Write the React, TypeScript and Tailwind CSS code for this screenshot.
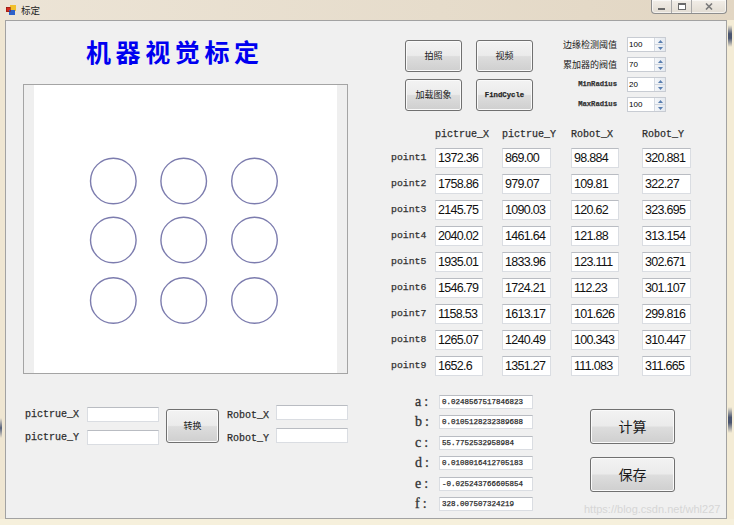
import React from 'react';

const cjk = "font-['Noto_Sans_CJK_SC',sans-serif]";
const mono = "font-['Liberation_Mono','Noto_Sans_CJK_SC',monospace] [-webkit-text-stroke:0.25px_#333]";

const rows = [
  ['point1', '1372.36', '869.00', '98.884', '320.881'],
  ['point2', '1758.86', '979.07', '109.81', '322.27'],
  ['point3', '2145.75', '1090.03', '120.62', '323.695'],
  ['point4', '2040.02', '1461.64', '121.88', '313.154'],
  ['point5', '1935.01', '1833.96', '123.111', '302.671'],
  ['point6', '1546.79', '1724.21', '112.23', '301.107'],
  ['point7', '1158.53', '1613.17', '101.626', '299.816'],
  ['point8', '1265.07', '1240.49', '100.343', '310.447'],
  ['point9', '1652.6', '1351.27', '111.083', '311.665'],
];

// column offsets for the 4 value columns
const cols = ['w-[48px]', 'ml-[19px] w-[49px]', 'ml-[20px] w-[48px]', 'ml-[23px] w-[49px]'];
const headers = ['pictrue_X', 'pictrue_Y', 'Robot_X', 'Robot_Y'];

const coeffs = [
  ['a', '0.0248567517846823'],
  ['b', '0.0105128232389688'],
  ['c', '55.7752532958984'],
  ['d', '0.0108016412705183'],
  ['e', '-0.025243766605854'],
  ['f', '328.007507324219'],
];

const circles = [79.3, 149.7, 220.5].flatMap((cx) => [96, 155, 215.5].map((cy) => ({ cx, cy })));

function WinButton({ children, className = '' }: { children: React.ReactNode; className?: string }) {
  return (
    <div
      className={`flex items-center justify-center rounded-[3px] border border-[#707070] bg-[linear-gradient(180deg,#f3f3f3_0%,#ebebeb_48%,#dddddd_52%,#cfcfcf_100%)] shadow-[inset_0_0_0_1px_#fafafa] text-[#1a1a1a] ${className}`}
    >
      {children}
    </div>
  );
}

function TextBox({ className = '', children }: { className?: string; children?: React.ReactNode }) {
  return (
    <div className={`border border-[#dadde2] border-t-[#b9bcc2] bg-white ${className}`}>{children}</div>
  );
}

function Spin({ value }: { value: string }) {
  return (
    <div className="flex h-[15px] w-[39px] border border-[#c8ccd3] bg-white">
      <div className="flex-1 pl-[1px] text-[8px] leading-[13px] font-['Liberation_Sans',sans-serif] text-black">{value}</div>
      <div className="flex w-[11px] flex-col border-l border-[#d6dbe2] bg-[linear-gradient(90deg,#f4f6f9,#e4e9ef)]">
        <div className="flex flex-1 items-center justify-center border-b border-[#cfd5dd]">
          <svg width="5" height="3" viewBox="0 0 5 3"><path d="M0 3 L2.5 0 L5 3 Z" fill="#5a7fb0" /></svg>
        </div>
        <div className="flex flex-1 items-center justify-center">
          <svg width="5" height="3" viewBox="0 0 5 3"><path d="M0 0 L2.5 3 L5 0 Z" fill="#5a7fb0" /></svg>
        </div>
      </div>
    </div>
  );
}

export default function App() {
  return (
    <div className="flex h-[525px] w-[734px] flex-col overflow-hidden bg-[linear-gradient(90deg,#ece4d6,#e6dccb_60%,#e2d6c3)]">
      {/* title bar */}
      <div className="flex h-[20px] shrink-0 items-start">
        <svg className="ml-[6px] mt-[5px]" width="11" height="11" viewBox="0 0 11 11">
          <rect x="0" y="2" width="5" height="5" fill="#d42a1e" />
          <rect x="4" y="0" width="6" height="6" fill="#f2c02a" />
          <rect x="3" y="5" width="6" height="5" fill="#2f62c9" />
          <rect x="0.5" y="2.5" width="4" height="4" fill="none" stroke="#8a1a10" strokeWidth="0.6" />
        </svg>
        <span className={`ml-[4px] mt-[4px] text-[9.5px] leading-[12px] text-[#1e1e1e] ${cjk}`}>标定</span>
        <div className="ml-auto mr-[7px] flex h-[14px] rounded-b-[4px] border border-t-0 border-[#8e8e8e] bg-[linear-gradient(180deg,#f2eee8,#e2dcd2)] shadow-[inset_0_0_0_1px_rgba(255,255,255,0.6)]">
          <div className="flex w-[20px] items-center justify-center border-r border-[#a8a8a8]">
            <div className="mt-[4px] h-[2px] w-[7px] border border-[#6a6a6a] bg-white" />
          </div>
          <div className="flex w-[20px] items-center justify-center border-r border-[#a8a8a8]">
            <div className="h-[7px] w-[8px] border border-[#6a6a6a] border-t-2 bg-white" />
          </div>
          <div className="flex w-[34px] items-center justify-center">
            <svg width="8" height="7" viewBox="0 0 8 7">
              <path d="M1 0.5 L7 6.5 M7 0.5 L1 6.5" stroke="#7a7a7a" strokeWidth="1.6" />
            </svg>
          </div>
        </div>
      </div>

      <div className="flex h-[499px] shrink-0">
        {/* left frame */}
        <div className="flex w-[5px] flex-col bg-[#efe6d2]">
          <div className="h-[398px]" />
          <div className="ml-0 h-[20px] w-[2px] bg-[linear-gradient(180deg,#efe6d2,#55607a,#efe6d2)]" />
        </div>

        {/* client area */}
        <div className="relative flex w-[722px] overflow-hidden border border-[#a2a2a2] bg-[#f0f0f0]">
          {/* left column */}
          <div className="ml-[17px] flex w-[325px] flex-col">
            <div className={`mt-[15px] h-[30px] pl-[63px] text-[25px] font-bold leading-[30px] tracking-[4.6px] text-[#0000f0] ${cjk}`}>
              机器视觉标定
            </div>
            <div className="mt-[18px] flex h-[290px] w-[325px] justify-center border border-[#a4a4a4] bg-[#efefef]">
              <div className="h-[288px] w-[303px] bg-white">
                <svg width="303" height="288" viewBox="0 0 303 288">
                  {circles.map((c, i) => (
                    <circle key={i} cx={c.cx} cy={c.cy} r="22.8" fill="none" stroke="#7c7cae" strokeWidth="1.4" />
                  ))}
                </svg>
              </div>
            </div>

            {/* conversion row */}
            <div className="mt-[31px] flex items-center">
              <div className="ml-[2px] grid grid-cols-[62px_72px] gap-y-[8px]">
                <span className={`text-[10px] leading-[15px] text-[#2a2a2a] ${mono}`}>pictrue_X</span>
                <TextBox className="h-[15px]" />
                <span className={`text-[10px] leading-[15px] text-[#2a2a2a] ${mono}`}>pictrue_Y</span>
                <TextBox className="h-[15px]" />
              </div>
              <WinButton className={`ml-[7px] h-[34px] w-[53px] text-[9px] ${cjk}`}>转换</WinButton>
              <div className="ml-[8px] mt-[3px] grid grid-cols-[49px_72px] gap-y-[8px]">
                <span className={`text-[10px] leading-[15px] text-[#2a2a2a] ${mono}`}>Robot_X</span>
                <TextBox className="-mt-[3px] h-[15px]" />
                <span className={`text-[10px] leading-[15px] text-[#2a2a2a] ${mono}`}>Robot_Y</span>
                <TextBox className="-mt-[3px] h-[15px]" />
              </div>
            </div>
          </div>

          {/* right column */}
          <div className="ml-[42px] flex flex-col">
            <div className="mt-[16px] flex items-start">
              <div className="ml-[15px] mt-[3px] grid grid-cols-[57px_57px] gap-x-[14px] gap-y-[7px]">
                <WinButton className={`h-[32px] text-[9px] ${cjk}`}>拍照</WinButton>
                <WinButton className={`h-[32px] text-[9px] ${cjk}`}>视频</WinButton>
                <WinButton className={`h-[32px] text-[9px] ${cjk}`}>加载图象</WinButton>
                <WinButton className={`h-[32px] text-[7.3px] font-bold ${mono}`}>FindCycle</WinButton>
              </div>
              <div className="ml-[10px] grid grid-cols-[74px_39px] items-center gap-x-[10px] gap-y-[5px]">
                <span className={`text-right text-[9px] leading-[15px] text-[#222] ${cjk}`}>边缘检测阈值</span>
                <Spin value="100" />
                <span className={`text-right text-[9px] leading-[15px] text-[#222] ${cjk}`}>累加器的阀值</span>
                <Spin value="70" />
                <span className={`text-right text-[7.2px] font-bold leading-[15px] text-[#333] ${mono}`}>MinRadius</span>
                <Spin value="20" />
                <span className={`text-right text-[7.2px] font-bold leading-[15px] text-[#333] ${mono}`}>MaxRadius</span>
                <Spin value="100" />
              </div>
            </div>

            {/* table header */}
            <div className="mt-[16px] flex h-[14px] items-center">
              <div className="w-[45px]" />
              {headers.map((h, i) => (
                <span key={h} className={`${cols[i]} text-[10px] leading-[14px] text-[#2a2a2a] ${mono}`}>
                  {h}
                </span>
              ))}
            </div>

            {/* table rows */}
            <div className="mt-[6px] flex flex-col gap-[6px]">
              {rows.map((r) => (
                <div key={r[0]} className="flex h-[20px] items-center">
                  <span className={`w-[45px] pl-[1px] text-[9.8px] leading-[20px] text-[#333] ${mono}`}>{r[0]}</span>
                  {r.slice(1).map((v, i) => (
                    <TextBox key={i} className={`${cols[i]} h-[20px]`}>
                      <span className="block pl-[2px] text-[12.5px] leading-[18px] tracking-[-0.7px] text-[#111] font-['Liberation_Sans',sans-serif]">
                        {v}
                      </span>
                    </TextBox>
                  ))}
                </div>
              ))}
            </div>

            {/* coefficients and actions */}
            <div className="mt-[19px] flex items-start">
              <div className="ml-[25px] grid grid-cols-[24px_94px] gap-y-[6.4px]">
                {coeffs.map(([k, v]) => (
                  <React.Fragment key={k}>
                    <span className="text-[14px] leading-[14px] text-[#333] font-['Liberation_Serif',serif] [-webkit-text-stroke:0.3px_#333]">
                      {k}
                      <span className="ml-[3px]">:</span>
                    </span>
                    <TextBox className="h-[14px]">
                      <span className={`block pl-[2px] text-[7.5px] leading-[12px] text-[#222] ${mono}`}>{v}</span>
                    </TextBox>
                  </React.Fragment>
                ))}
              </div>
              <div className="ml-[57px] mt-[14px] flex flex-col gap-[13px]">
                <WinButton className={`h-[35px] w-[85px] text-[14px] ${cjk}`}>计算</WinButton>
                <WinButton className={`h-[35px] w-[85px] text-[14px] ${cjk}`}>保存</WinButton>
              </div>
            </div>
          </div>

          {/* watermark */}
          <span className="absolute left-[578px] top-[481px] text-[11px] leading-[14px] text-[#d6d6d6] font-['Liberation_Sans',sans-serif]">
            https://blog.csdn.net/whl227
          </span>
        </div>

        {/* right frame */}
        <div className="flex w-[7px] flex-col bg-[#f4ecd6]">
          <div className="h-[5px]" />
          <div className="ml-[1px] h-[22px] w-[4px] bg-[linear-gradient(180deg,#f4ecd6,#4a5570_40%,#4a5570_60%,#f4ecd6)]" />
          <div className="h-[360px]" />
          <div className="ml-[1px] h-[26px] w-[4px] bg-[linear-gradient(180deg,#f4ecd6,#4a5570_40%,#4a5570_60%,#f4ecd6)]" />
        </div>
      </div>
      <div className="flex-1 bg-[#f6f0dc]" />
    </div>
  );
}
